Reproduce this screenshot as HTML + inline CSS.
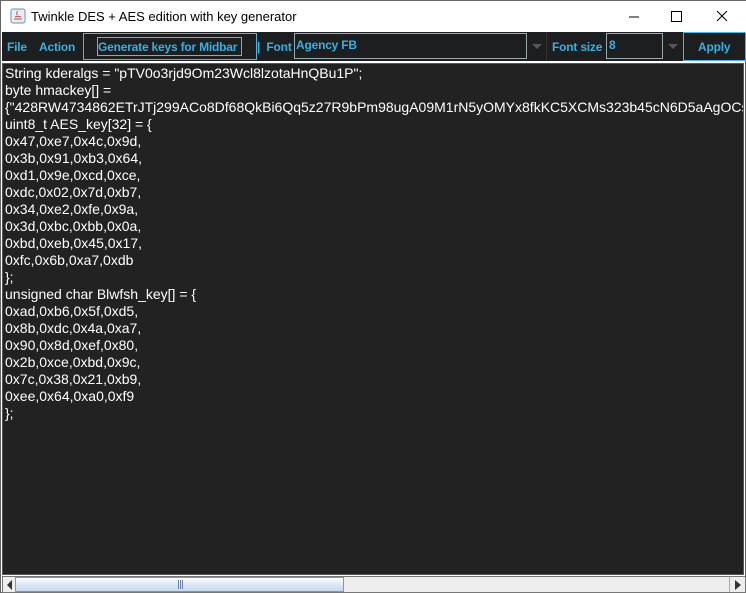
<!DOCTYPE html>
<html><head><style>
*{margin:0;padding:0;box-sizing:border-box}
body{width:746px;height:593px;position:relative;background:#fff;font-family:"Liberation Sans",Arial,sans-serif;overflow:hidden}
.win{position:absolute;left:0;top:0;width:746px;height:593px;border:1px solid #666}
.title{position:absolute;left:0;top:0;width:746px;height:31px;background:#fff}
.title span{position:absolute;left:30px;top:8px;font-size:13px;color:#000}
.tb{position:absolute;left:1px;top:31px;width:744px;height:29px;background:#1c1e1f}
.t{position:absolute;color:#3ab0e0;font-weight:bold;font-size:12px;top:8px;letter-spacing:-0.2px;white-space:nowrap}
.box{position:absolute;border:1px solid #9aa;background:#1c1e1f}
.text{position:absolute;left:1px;top:62px;width:742px;height:512px;background:#222;border:1px solid #555;color:#fff;font-size:14px;line-height:17px;padding:1px 0 0 2px;white-space:pre;overflow:hidden}
.sb{position:absolute;left:1px;top:575px;width:744px;height:17px;background:#eee;border:1px solid #777}
</style></head><body>
<div class="win">
<div class="title">
<svg style="position:absolute;left:9px;top:7px" width="16" height="16"><rect x="1" y="1" width="14" height="14" rx="2" fill="#e6eef5" stroke="#7a8ea0"/><path d="M4 11h8M5 9c2-1 4-1 6 0M7 3c1 1-1 2 0 4" stroke="#c44" fill="none"/></svg>
<span>Twinkle DES + AES edition with key generator</span>
<svg style="position:absolute;left:620px;top:9px" width="115" height="14"><path d="M8 7h10" stroke="#000"/><rect x="50.5" y="1.5" width="10" height="10" fill="none" stroke="#000"/><path d="M96 1l10 10M106 1l-10 10" stroke="#000"/></svg>
</div>
<div class="tb">
<div class="t" style="left:5px">File</div>
<div class="t" style="left:37px">Action</div>
<div class="box" style="left:81px;top:1px;width:174px;height:27px;border-color:#4ab8e0"></div>
<div class="box" style="left:95px;top:5px;width:145px;height:19px;border-color:#8ab"></div>
<div class="t" style="left:96px">Generate keys for Midbar</div>
<div class="t" style="left:255px">|&nbsp; Font</div>
<div class="box" style="left:292px;top:1px;width:233px;height:26px"></div>
<div class="t" style="left:294px;top:6px">Agency FB</div>
<svg style="position:absolute;left:530px;top:12px" width="10" height="6"><path d="M0 0h10L5 5z" fill="#555"/></svg>
<div style="position:absolute;left:544px;top:0;width:1px;height:29px;background:#333"></div>
<div class="t" style="left:550px">Font size</div>
<div class="box" style="left:604px;top:1px;width:57px;height:26px"></div>
<div class="t" style="left:607px;top:6px">8</div>
<svg style="position:absolute;left:666px;top:12px" width="10" height="6"><path d="M0 0h10L5 5z" fill="#555"/></svg>
<div class="box" style="left:681px;top:0;width:63px;height:29px;border-color:#4ab8e0"></div>
<div class="t" style="left:696px">Apply</div>
</div>
<div class="text">String kderalgs = "pTV0o3rjd9Om23Wcl8lzotaHnQBu1P";
byte hmackey[] = 
{"428RW4734862ETrJTj299ACo8Df68QkBi6Qq5z27R9bPm98ugA09M1rN5yOMYx8fkKC5XCMs323b45cN6D5aAgOCs
uint8_t AES_key[32] = {
0x47,0xe7,0x4c,0x9d,
0x3b,0x91,0xb3,0x64,
0xd1,0x9e,0xcd,0xce,
0xdc,0x02,0x7d,0xb7,
0x34,0xe2,0xfe,0x9a,
0x3d,0xbc,0xbb,0x0a,
0xbd,0xeb,0x45,0x17,
0xfc,0x6b,0xa7,0xdb
};
unsigned char Blwfsh_key[] = {
0xad,0xb6,0x5f,0xd5,
0x8b,0xdc,0x4a,0xa7,
0x90,0x8d,0xef,0x80,
0x2b,0xce,0xbd,0x9c,
0x7c,0x38,0x21,0xb9,
0xee,0x64,0xa0,0xf9
};</div>
<div class="sb">
<svg style="position:absolute;left:4px;top:3px" width="6" height="10"><path d="M5 0v10L0 5z" fill="#333"/></svg>
<div style="position:absolute;left:12px;top:0;width:329px;height:15px;border:1px solid #7a96c8;background:linear-gradient(#fff,#dde8f5 50%,#c8d8ee)"></div>
<div style="position:absolute;left:175px;top:3px;width:5px;height:9px;border-left:1px solid #6a80b0;border-right:1px solid #6a80b0"><div style="margin-left:1px;width:1px;height:9px;background:#6a80b0"></div></div>
<div style="position:absolute;left:726px;top:0;width:1px;height:15px;background:#aab"></div>
<svg style="position:absolute;left:732px;top:3px" width="6" height="10"><path d="M0 0v10L6 5z" fill="#333"/></svg>
</div>
</div>
</body></html>
